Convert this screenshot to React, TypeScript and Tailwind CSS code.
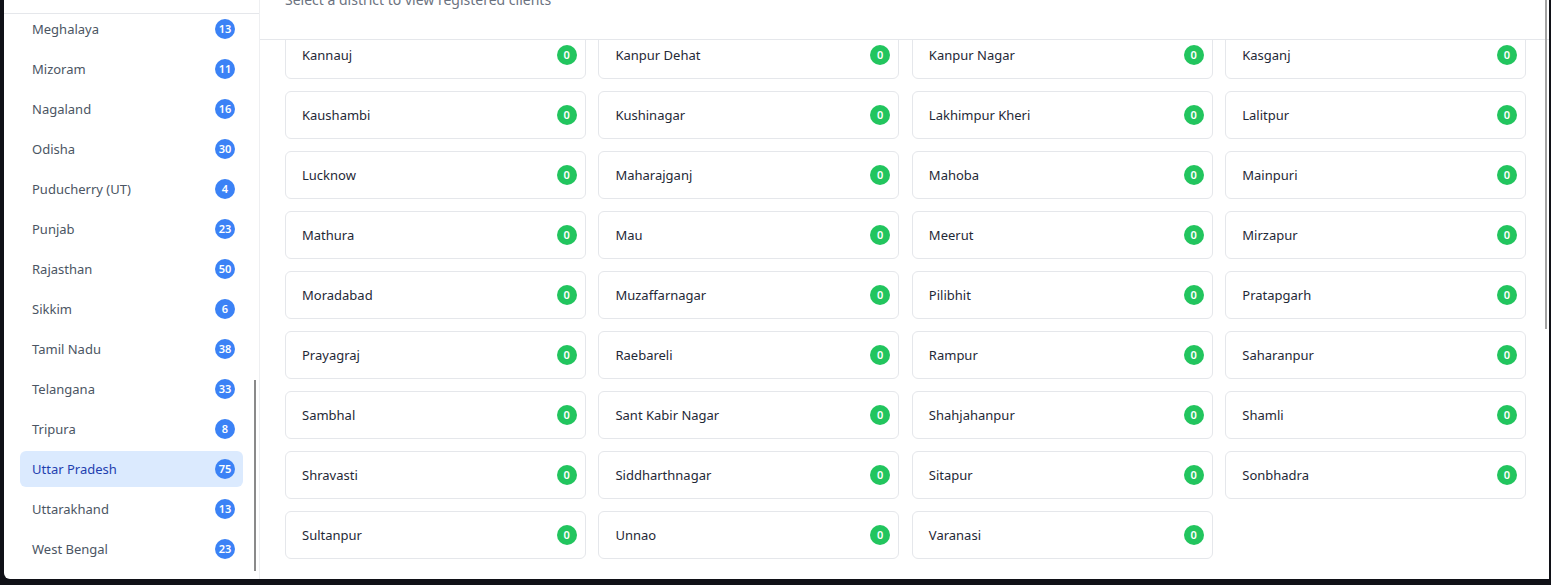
const states = [
  { name: "Meghalaya", count: 13 },
  { name: "Mizoram", count: 11 },
  { name: "Nagaland", count: 16 },
  { name: "Odisha", count: 30 },
  { name: "Puducherry (UT)", count: 4 },
  { name: "Punjab", count: 23 },
  { name: "Rajasthan", count: 50 },
  { name: "Sikkim", count: 6 },
  { name: "Tamil Nadu", count: 38 },
  { name: "Telangana", count: 33 },
  { name: "Tripura", count: 8 },
  { name: "Uttar Pradesh", count: 75 },
  { name: "Uttarakhand", count: 13 },
  { name: "West Bengal", count: 23 },
];

const districts = [
  "Kannauj", "Kanpur Dehat", "Kanpur Nagar", "Kasganj",
  "Kaushambi", "Kushinagar", "Lakhimpur Kheri", "Lalitpur",
  "Lucknow", "Maharajganj", "Mahoba", "Mainpuri",
  "Mathura", "Mau", "Meerut", "Mirzapur",
  "Moradabad", "Muzaffarnagar", "Pilibhit", "Pratapgarh",
  "Prayagraj", "Raebareli", "Rampur", "Saharanpur",
  "Sambhal", "Sant Kabir Nagar", "Shahjahanpur", "Shamli",
  "Shravasti", "Siddharthnagar", "Sitapur", "Sonbhadra",
  "Sultanpur", "Unnao", "Varanasi",
];

function StateItem({ name, count, active }: { name: string; count: number; active: boolean }) {
  return (
    <div
      className={
        active
          ? "flex items-center justify-between h-9 pl-3 pr-2 rounded-md bg-[#dbeafe] text-[#1e40af]"
          : "flex items-center justify-between h-9 pl-3 pr-2 rounded-md text-[#4b5563]"
      }
    >
      <span className="text-[13px] leading-[22px]">{name}</span>
      <span className="flex items-center justify-center w-5 h-5 rounded-full bg-[#3b82f6] text-white text-[11px] font-semibold">
        {count}
      </span>
    </div>
  );
}

function DistrictCard({ name }: { name: string }) {
  return (
    <div className="flex items-center justify-between h-12 pl-4 pr-2 bg-white border border-[#e5e7eb] rounded-md">
      <span className="text-[13px] leading-[22px] text-[#1f2937]">{name}</span>
      <span className="flex items-center justify-center w-5 h-5 rounded-full bg-[#22c55e] text-white text-[11px] font-semibold">
        0
      </span>
    </div>
  );
}

export default function App() {
  const selected = "Uttar Pradesh";

  return (
    <div
      className="w-[1551px] h-[585px] overflow-hidden bg-[#101117] pl-[4px] pb-[6px]"
      style={{ fontFamily: '"Noto Sans", "Open Sans", sans-serif' }}
    >
      <div className="flex w-[1545px] h-full bg-white rounded-bl-md overflow-hidden">
        {/* states sidebar */}
        <aside className="flex flex-col w-[256px] border-r border-[#eeeff1]">
          <div className="h-[14px] border-b border-[#e5e7eb]" />
          <div className="relative flex-1 overflow-hidden px-4">
            <div className="-mt-[3px] flex flex-col gap-1">
              {states.map((s) => (
                <StateItem key={s.name} name={s.name} count={s.count} active={s.name === selected} />
              ))}
            </div>
            <div className="absolute right-[3px] bottom-[8px] w-[2px] h-[191px] bg-[#8a8a8a]" />
          </div>
        </aside>

        {/* districts */}
        <main className="relative flex flex-col flex-1">
          <div className="h-[40px] border-b border-[#e5e7eb] pl-[25px] overflow-hidden">
            <p className="-mt-[10px] text-sm text-[#6b7280]">Select a district to view registered clients</p>
          </div>
          <div className="flex-1 overflow-hidden pl-[25px] pr-[23px]">
            <div className="-mt-[9px] grid grid-cols-4 gap-x-[12.7px] gap-y-3">
              {districts.map((d) => (
                <DistrictCard key={d} name={d} />
              ))}
            </div>
          </div>
          <div className="absolute top-0 right-[2px] w-[2px] h-[329px] bg-[#a3a3a3]" />
        </main>
      </div>
    </div>
  );
}
